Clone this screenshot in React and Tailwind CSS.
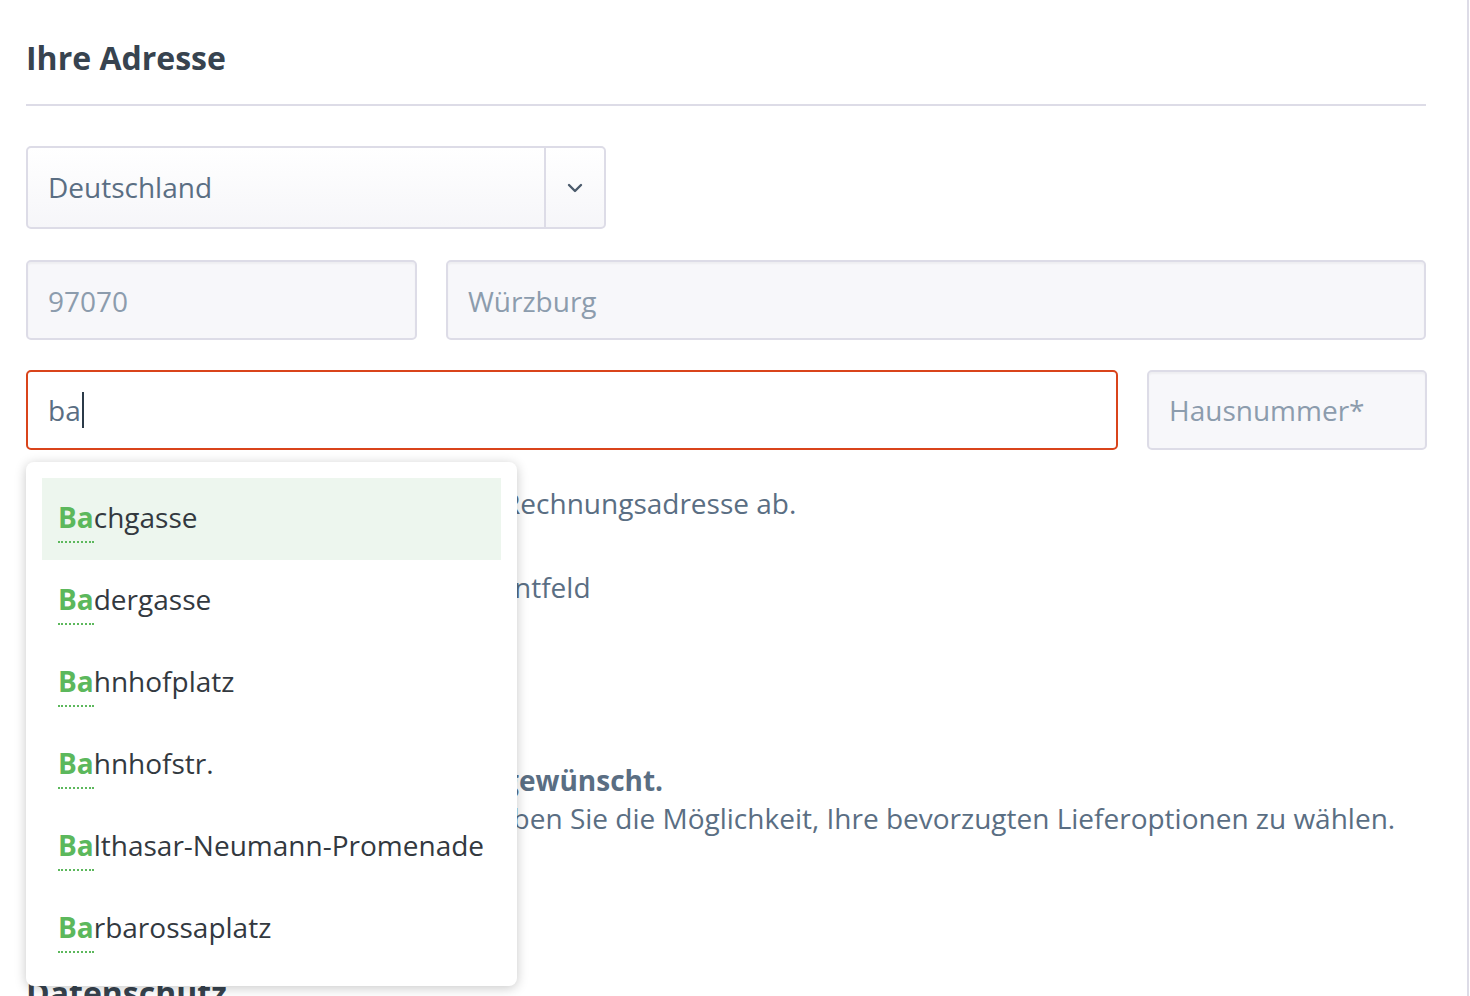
import { useState } from 'react'

const streets = [
  'Bachgasse',
  'Badergasse',
  'Bahnhofplatz',
  'Bahnhofstr.',
  'Balthasar-Neumann-Promenade',
  'Barbarossaplatz',
]

const Suggestion = ({ name, query, active }) => {
  const head = name.slice(0, query.length)
  const rest = name.slice(query.length)
  return (
    <li
      className={`flex h-[82px] items-center px-4 pb-[4px] text-[28px] text-[#33393f] ${
        active ? 'bg-[#edf6ee]' : ''
      }`}
    >
      <span>
        <strong className="border-b-2 border-dotted border-[#5cb85c] pb-[5px] font-bold text-[#5cb85c]">
          {head}
        </strong>
        {rest}
      </span>
    </li>
  )
}

export default function App() {
  const [query] = useState('ba')

  return (
    <div className="h-[996px] w-[1469px] overflow-hidden border-r-2 border-[#dddce7] bg-white px-[26px] font-['Open_Sans',sans-serif] text-[#5a6e83]">
      <h2 className="pt-[38px] text-[32px] font-bold leading-[40px] text-[#37434f]">Ihre Adresse</h2>
      <div className="mt-[26px] h-[2px] w-[1400px] bg-[#dddce7]" />

      {/* Land */}
      <div className="mt-[40px] flex h-[83px] w-[580px] overflow-hidden rounded-[5px] border-2 border-[#dddce7] bg-gradient-to-b from-white to-[#f6f6f9]">
        <div className="flex flex-1 items-center px-5 pb-[1px] text-[28px] text-[#5a6e83]">Deutschland</div>
        <div className="flex w-[60px] items-center justify-center border-l-2 border-[#dddce7]">
          <svg width="16" height="10" viewBox="0 0 16 10" fill="none">
            <path d="M2 2l6 6 6-6" stroke="#4b5b6c" strokeWidth="2.4" strokeLinecap="round" strokeLinejoin="round" />
          </svg>
        </div>
      </div>

      {/* PLZ / Ort */}
      <div className="mt-[31px] flex h-[80px] w-[1400px] gap-[29px]">
        <div className="flex w-[391px] items-center rounded-[5px] border-2 border-[#dddce7] bg-[#f7f7fa] px-5 pt-[1px] text-[28px] text-[#8c9cad] shadow-[inset_0_2px_2px_rgba(0,0,0,0.04)]">
          97070
        </div>
        <div className="flex flex-1 items-center rounded-[5px] border-2 border-[#dddce7] bg-[#f7f7fa] px-5 pt-[1px] text-[28px] text-[#8c9cad] shadow-[inset_0_2px_2px_rgba(0,0,0,0.04)]">
          Würzburg
        </div>
      </div>

      {/* Straße / Hausnummer */}
      <div className="relative mt-[30px]">
        <div className="flex h-[80px] w-[1401px] gap-[29px]">
          <div className="flex flex-1 items-center rounded-[5px] border-2 border-[#d9441b] bg-white px-5 text-[28px] text-[#5a6e83]">
            <span>{query}</span>
            <span className="ml-[1px] h-[36px] w-[2px] bg-[#2b3a48]" />
          </div>
          <div className="flex w-[280px] items-center rounded-[5px] border-2 border-[#dddce7] bg-[#f7f7fa] px-5 text-[28px] text-[#8c9cad] shadow-[inset_0_2px_2px_rgba(0,0,0,0.04)]">
            Hausnummer*
          </div>
        </div>

        <ul className="absolute left-0 top-[92px] z-10 w-[491px] rounded-[8px] bg-white p-4 shadow-[0_2px_12px_rgba(0,0,0,0.22)]">
          {streets.map((s, i) => (
            <Suggestion key={s} name={s} query={query} active={i === 0} />
          ))}
        </ul>
      </div>

      <label className="mt-[33px] flex h-[40px] items-center gap-4 text-[28px] leading-[40px]">
        <span className="h-[28px] w-[28px] rounded-[4px] border-2 border-[#c9c8d6] bg-white" />
        <span>Die Lieferadresse weicht von der Rechnungsadresse ab.</span>
      </label>

      <label className="mt-[44px] flex h-[40px] items-center gap-4 text-[28px] leading-[40px]">
        <span className="h-[28px] w-[28px] rounded-[4px] border-2 border-[#c9c8d6] bg-white" />
        <span>Hinweis zur Zustellung im Kommentfeld</span>
      </label>

      <h3 className="mt-[70px] text-[28px] font-bold leading-[40px] text-[#37434f]">Lieferung</h3>

      <div className="mt-[44px] flex gap-[19px]">
        <span className="mt-[5px] h-[28px] w-[28px] shrink-0 rounded-full border-2 border-[#c9c8d6] bg-white" />
        <div>
          <p className="pl-[25px] text-[28px] font-bold leading-[38px]">Keine gesonderte Zustellung gewünscht.</p>
          <p className="text-[28px] leading-[38px]">
            Nach Abschluss der Bestellung haben Sie die Möglichkeit, Ihre bevorzugten Lieferoptionen zu wählen.
          </p>
        </div>
      </div>

      <h2 className="mt-[136px] text-[32px] font-bold leading-[40px] text-[#37434f]">Datenschutz</h2>
    </div>
  )
}
